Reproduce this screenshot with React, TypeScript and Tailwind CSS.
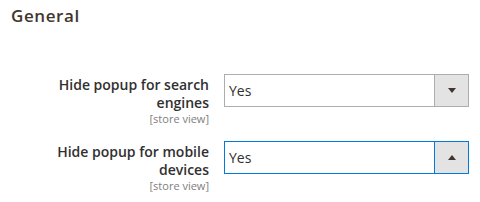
import React from "react";

function Row({ label1, label2, open, className }: { label1: string; label2: string; open?: boolean; className?: string }) {
  return (
    <div className={"flex items-start " + (className ?? "")}>
      <div className="w-[209px] pt-[2px] text-right">
        <div className="text-[14px] leading-[18px] font-semibold text-[#303030]">
          {label1}
          <br />
          {label2}
        </div>
        <div className="text-[11px] leading-[13px] text-[#808080]">[store view]</div>
      </div>
      <div
        className={
          "ml-[15px] flex h-[33px] w-[245px] border " +
          (open ? "border-[#007bdb]" : "border-[#adadad]")
        }
      >
        <div className="flex flex-1 items-center pl-[4px] text-[14px] text-[#303030]">Yes</div>
        <div
          className={
            "flex w-[34px] items-center justify-center border-l bg-[#e3e3e3] " +
            (open ? "border-[#007bdb]" : "border-[#adadad]")
          }
        >
          {open ? (
            <div className="h-0 w-0 border-x-[4px] border-b-[5px] border-x-transparent border-b-[#41362f]" />
          ) : (
            <div className="h-0 w-0 border-x-[4px] border-t-[5px] border-x-transparent border-t-[#41362f]" />
          )}
        </div>
      </div>
    </div>
  );
}

export default function App() {
  return (
    <div
      className="h-[202px] w-[480px] bg-white"
      style={{ fontFamily: '"Open Sans", "Liberation Sans", sans-serif' }}
    >
      <div className="pl-[11px] pt-[5px] text-[17px] leading-[21px] font-semibold tracking-[0.6px] text-[#41362f]">General</div>
      <div className="mt-[48px] flex flex-col">
        <Row label1="Hide popup for search" label2="engines" />
        <Row label1="Hide popup for mobile" label2="devices" open className="mt-[16px]" />
      </div>
    </div>
  );
}
